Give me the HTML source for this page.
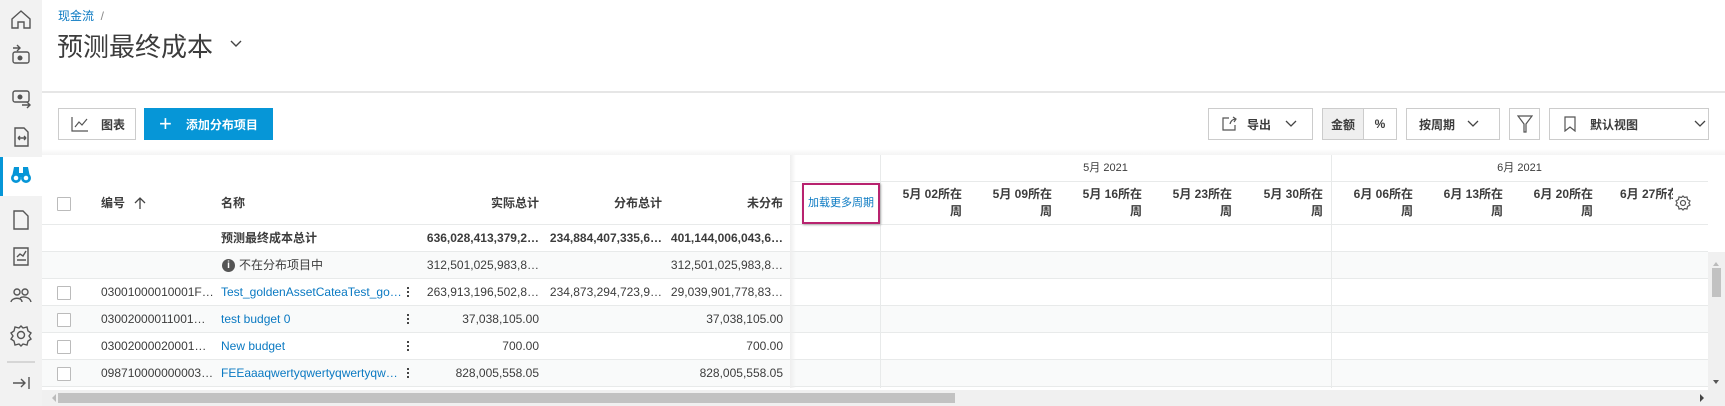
<!DOCTYPE html>
<html><head><meta charset="utf-8"><style>
*{box-sizing:border-box;margin:0;padding:0}
body{width:1725px;height:406px;overflow:hidden;background:#fff;font-family:"Liberation Sans","Noto Sans CJK SC",sans-serif;font-size:12px;color:#3c3c3c;position:relative}
.a{position:absolute}
.sb{left:0;top:0;width:42px;height:406px;background:#f2f2f2}
.btn{position:absolute;top:108px;height:32px;border:1px solid #ccc;background:#fff;display:flex;align-items:center;font-weight:bold;font-size:12px;color:#3c3c3c;white-space:nowrap}
.row{position:absolute;left:42px;width:1666px;height:27px;border-bottom:1px solid #e8eaea}
.t{position:absolute;white-space:nowrap;line-height:27px}
.r{text-align:right}
.cb{position:absolute;left:57px;width:14px;height:14px;border:1px solid #bbb;background:#fff;border-radius:1px}
.lnk{color:#0a79c2}
.wk{position:absolute;top:186px;width:90px;text-align:right;font-weight:bold;line-height:17px;padding-right:8px;font-size:12px;white-space:nowrap}
.dots{position:absolute;left:407px;width:3px}
.dots i{display:block;width:2px;height:2px;background:#444;margin-bottom:2px}
</style></head><body>
<div class="a sb"></div>
<div class="a" style="left:0;top:157px;width:42px;height:39px;background:#fff;border-left:3px solid #0696d7"></div>
<svg class="a" style="left:0;top:0" width="42" height="406" fill="none" stroke="#555" stroke-width="1.4">
<path d="M12 19 L21 11 L30 19 V28 H24 V22 H18 V28 H12 Z"/>
<rect x="13" y="52" width="16" height="11" rx="2"/><circle cx="20" cy="58" r="1.8" fill="#555"/><path d="M13 48 H20 M17 45 L20 48 L17 51"/>
<rect x="13" y="91" width="16" height="11" rx="2"/><circle cx="20" cy="97" r="1.8" fill="#555"/><path d="M22 105 H30 M27 102 L30 105 L27 108"/>
<path d="M15 128 H24 L28 132 V146 H15 Z M18 138 H26 M18 138 L20 136 M18 138 L20 140 M26 138 L24 136 M26 138 L24 140"/>
<path d="M14 211 H23 L28 216 V229 H14 Z"/>
<path d="M14 248 H28 V265 H14 Z M17 257 L20 254 L23 256 L26 251 M17 260 H26"/>
<circle cx="17" cy="292" r="3"/><circle cx="25" cy="292" r="3"/><path d="M11 302 C12 297 22 297 22 302 M20 298 C23 296 30 297 31 302"/>
<circle cx="21" cy="335" r="3.5"/><path d="M21 326 L23 328 L27 327 L28 331 L31 333 L29 336 L31 339 L28 341 L27 345 L23 344 L21 346 L19 344 L15 345 L14 341 L11 339 L13 336 L11 333 L14 331 L15 327 L19 328 Z"/>
<path d="M7 362 H35" stroke="#ccc"/>
<path d="M13 383 H25 M21 379 L25 383 L21 387 M29 377 V389"/>
</svg>
<svg class="a" style="left:10px;top:165px" width="22" height="20"><g fill="#0696d7"><path d="M4 2 H9 V8 H13 V2 H18 L20 12 H2 Z"/><circle cx="6" cy="13" r="5"/><circle cx="16" cy="13" r="5"/></g><circle cx="6" cy="13" r="2.3" fill="#fff"/><circle cx="16" cy="13" r="2.3" fill="#fff"/></svg>

<div class="a lnk" style="left:58px;top:7px;font-size:12px">现金流 <span style="color:#888">&nbsp;/</span></div>
<div class="a" style="left:57px;top:27px;font-size:26px;color:#3c3c3c">预测最终成本</div>
<svg class="a" style="left:230px;top:40px" width="12" height="8"><path d="M1 1 L6 6 L11 1" stroke="#444" stroke-width="1.4" fill="none"/></svg>
<div class="a" style="left:42px;top:91px;width:1683px;height:2px;background:#e6e6e6"></div>
<div class="a" style="left:42px;top:149px;width:1683px;height:6px;background:linear-gradient(#fff,#f4f4f4)"></div>

<div class="btn" style="left:58px;width:78px;padling-left:12px;padding-left:12px"><svg width="18" height="16" fill="none" stroke="#555" stroke-width="1.2"><path d="M1 1 V15 H17 M4 11 L8 6 L11 9 L16 3"/></svg><span style="margin-left:12px">图表</span></div>
<div class="btn" style="left:144px;width:129px;background:#0696d7;border-color:#0696d7;color:#fff;padding-left:14px"><span style="font-size:22px;font-weight:normal;line-height:20px">+</span><span style="margin-left:14px">添加分布项目</span></div>
<div class="btn" style="left:1208px;width:105px;padding-left:12px"><svg width="16" height="16" fill="none" stroke="#555" stroke-width="1.2"><path d="M8 2 H2 V14 H14 V9 M9 8 C10 4 13 3 15 3 M12 1 L15 3 L13 6"/></svg><span style="margin-left:10px">导出</span><svg style="margin-left:14px" width="12" height="8"><path d="M1 1 L6 6 L11 1" stroke="#444" stroke-width="1.3" fill="none"/></svg></div>
<div class="btn" style="left:1322px;width:75px"><span style="width:41px;height:30px;background:#efefef;border-right:1px solid #ccc;display:flex;align-items:center;justify-content:center">金额</span><span style="flex:1;text-align:center">%</span></div>
<div class="btn" style="left:1406px;width:94px;padding-left:12px">按周期<svg style="margin-left:12px" width="12" height="8"><path d="M1 1 L6 6 L11 1" stroke="#444" stroke-width="1.3" fill="none"/></svg></div>
<div class="btn" style="left:1509px;width:31px;justify-content:center"><svg width="16" height="18" fill="none" stroke="#555" stroke-width="1.2"><path d="M1 1 H15 L9 9 V17 H7 V9 Z"/></svg></div>
<div class="btn" style="left:1549px;width:160px;padding-left:14px"><svg width="12" height="16" fill="none" stroke="#555" stroke-width="1.2"><path d="M1 1 H11 V15 L6 11 L1 15 Z"/></svg><span style="margin-left:14px;width:90px">默认视图</span><svg style="margin-left:14px" width="12" height="8"><path d="M1 1 L6 6 L11 1" stroke="#444" stroke-width="1.3" fill="none"/></svg></div>

<div class="row" style="top:155px;height:27px"></div>
<div class="row" style="top:182px;height:43px"></div>
<div class="row" style="top:225px"></div>
<div class="row" style="top:252px;background:#f9fafa"></div>
<div class="row" style="top:279px"></div>
<div class="row" style="top:306px;background:#f9fafa"></div>
<div class="row" style="top:333px"></div>
<div class="row" style="top:360px;background:#f9fafa"></div>
<div class="a" style="left:42px;top:155px;width:748px;height:27px;background:#fff"></div>
<div class="a" style="left:790px;top:155px;width:6px;height:233px;background:linear-gradient(90deg,#eee,rgba(255,255,255,0))"></div>
<div class="a" style="left:880px;top:155px;width:1px;height:233px;background:#e8eaea"></div>
<div class="a" style="left:1331px;top:155px;width:1px;height:233px;background:#e8eaea"></div>

<div class="t" style="left:880px;top:155px;width:451px;text-align:center;font-size:11px">5月 2021</div>
<div class="t" style="left:1331px;top:155px;width:377px;text-align:center;font-size:11px">6月 2021</div>

<div class="cb" style="top:197px"></div>
<div class="t" style="left:101px;top:190px;font-weight:bold">编号</div>
<svg class="a" style="left:134px;top:196px" width="12" height="14"><path d="M6 13 V2 M1 7 L6 2 L11 7" stroke="#444" stroke-width="1.3" fill="none"/></svg>
<div class="t" style="left:221px;top:190px;font-weight:bold">名称</div>
<div class="t r" style="left:440px;width:99px;top:190px;font-weight:bold">实际总计</div>
<div class="t r" style="left:560px;width:102px;top:190px;font-weight:bold">分布总计</div>
<div class="t r" style="left:680px;width:103px;top:190px;font-weight:bold">未分布</div>
<div class="a" style="left:802px;top:183px;width:78px;height:41px;border:2px solid #b8236f;box-shadow:1px 1px 2px #aaa;color:#0a79c2;font-size:11px;text-align:center;line-height:37px;white-space:nowrap">加载更多周期</div>
<div class="wk" style="left:880px">5月 02所在<br>周</div>
<div class="wk" style="left:970px">5月 09所在<br>周</div>
<div class="wk" style="left:1060px">5月 16所在<br>周</div>
<div class="wk" style="left:1150px">5月 23所在<br>周</div>
<div class="wk" style="left:1241px">5月 30所在<br>周</div>
<div class="wk" style="left:1331px">6月 06所在<br>周</div>
<div class="wk" style="left:1421px">6月 13所在<br>周</div>
<div class="wk" style="left:1511px">6月 20所在<br>周</div>
<div class="wk" style="left:1601px;width:72px;overflow:hidden;text-align:left;padding-left:19px;padding-right:0">6月 27所在</div>
<svg class="a" style="left:1675px;top:195px" width="16" height="16" fill="none" stroke="#555" stroke-width="1.2"><circle cx="8" cy="8" r="2.5"/><path d="M8 1 L9.5 2.5 L12 2 L12.5 4.5 L15 6 L13.8 8 L15 10 L12.5 11.5 L12 14 L9.5 13.5 L8 15 L6.5 13.5 L4 14 L3.5 11.5 L1 10 L2.2 8 L1 6 L3.5 4.5 L4 2 L6.5 2.5 Z"/></svg>

<div class="t" style="left:221px;top:225px;font-weight:bold">预测最终成本总计</div>
<div class="t r" style="left:420px;width:119px;top:225px;font-weight:bold">636,028,413,379,2…</div>
<div class="t r" style="left:540px;width:122px;top:225px;font-weight:bold">234,884,407,335,6…</div>
<div class="t r" style="left:660px;width:123px;top:225px;font-weight:bold">401,144,006,043,6…</div>
<div class="a" style="left:222px;top:259px;width:13px;height:13px;border-radius:50%;background:#555;color:#fff;font-size:10px;font-weight:bold;text-align:center;line-height:13px">i</div>
<div class="t" style="left:239px;top:252px">不在分布项目中</div>
<div class="t r" style="left:420px;width:119px;top:252px">312,501,025,983,8…</div>
<div class="t r" style="left:660px;width:123px;top:252px">312,501,025,983,8…</div>
<div class="cb" style="top:286px"></div>
<div class="t" style="left:101px;top:279px">03001000010001F…</div>
<div class="t lnk" style="left:221px;top:279px">Test_goldenAssetCateaTest_go…</div>
<div class="dots" style="top:287px"><i></i><i></i><i></i></div>
<div class="t r" style="left:420px;width:119px;top:279px">263,913,196,502,8…</div>
<div class="t r" style="left:540px;width:122px;top:279px">234,873,294,723,9…</div>
<div class="t r" style="left:660px;width:123px;top:279px">29,039,901,778,83…</div>
<div class="cb" style="top:313px"></div>
<div class="t" style="left:101px;top:306px">03002000011001…</div>
<div class="t lnk" style="left:221px;top:306px">test budget 0</div>
<div class="dots" style="top:314px"><i></i><i></i><i></i></div>
<div class="t r" style="left:420px;width:119px;top:306px">37,038,105.00</div>
<div class="t r" style="left:660px;width:123px;top:306px">37,038,105.00</div>
<div class="cb" style="top:340px"></div>
<div class="t" style="left:101px;top:333px">03002000020001…</div>
<div class="t lnk" style="left:221px;top:333px">New budget</div>
<div class="dots" style="top:341px"><i></i><i></i><i></i></div>
<div class="t r" style="left:420px;width:119px;top:333px">700.00</div>
<div class="t r" style="left:660px;width:123px;top:333px">700.00</div>
<div class="cb" style="top:367px"></div>
<div class="t" style="left:101px;top:360px">098710000000003…</div>
<div class="t lnk" style="left:221px;top:360px">FEEaaaqwertyqwertyqwertyqw…</div>
<div class="dots" style="top:368px"><i></i><i></i><i></i></div>
<div class="t r" style="left:420px;width:119px;top:360px">828,005,558.05</div>
<div class="t r" style="left:660px;width:123px;top:360px">828,005,558.05</div>

<div class="a" style="left:1708px;top:252px;width:17px;height:138px;background:#f0f0f0"></div>
<div class="a" style="left:1712px;top:268px;width:9px;height:29px;background:#c2c2c2"></div>
<div class="a" style="left:1713px;top:259px;width:0;height:0;border:3px solid transparent;border-bottom:4px solid #bbb"></div>
<div class="a" style="left:1713px;top:380px;width:0;height:0;border:3px solid transparent;border-top:4px solid #555"></div>
<div class="a" style="left:42px;top:390px;width:1683px;height:16px;background:#f0f0f0"></div>
<div class="a" style="left:58px;top:393px;width:897px;height:10px;background:#c2c2c2"></div>
<div class="a" style="left:48px;top:394px;width:0;height:0;border:4px solid transparent;border-right:4px solid #bbb"></div>
<div class="a" style="left:1700px;top:394px;width:0;height:0;border:4px solid transparent;border-left:4px solid #444"></div>
</body></html>
